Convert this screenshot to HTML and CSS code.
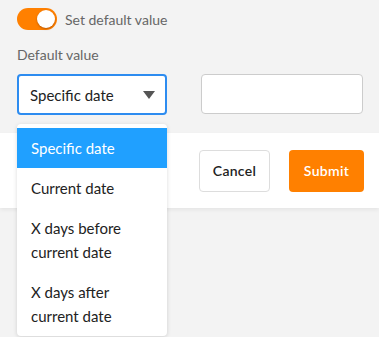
FILE: index.html
```html
<!DOCTYPE html>
<html lang="en">
<head>
    <meta charset="UTF-8">
    <title>Default value</title>
    <link rel="stylesheet" href="styles.css">
</head>
<body>
    <div class="form">
        <div class="switch-row">
            <span class="switch on"><span class="switch-knob"></span></span>
            <span class="switch-label">Set default value</span>
        </div>

        <div class="field-label">Default value</div>

        <div class="field-row">
            <div class="select-wrap">
                <div class="select focused">
                    <span class="select-value">Specific date</span>
                    <span class="caret"></span>
                </div>
                <ul class="dropdown">
                    <li class="dropdown-item selected">Specific date</li>
                    <li class="dropdown-item">Current date</li>
                    <li class="dropdown-item">X days before current date</li>
                    <li class="dropdown-item">X days after current date</li>
                </ul>
            </div>
            <input type="text" class="text-input">
        </div>
    </div>

    <div class="footer">
        <button class="btn btn-default">Cancel</button>
        <button class="btn btn-primary">Submit</button>
    </div>
</body>
</html>
```

FILE: styles.css
```css
* {
    margin: 0;
    padding: 0;
    box-sizing: border-box;
}

body {
    font-family: Lato, "Open Sans", sans-serif;
    background: #f3f3f3;
    color: #222;
    height: 337px;
    overflow: hidden;
}

.form {
    padding: 8px 16px 0 17px;
}

.switch-row {
    display: flex;
    align-items: center;
    gap: 8px;
    height: 22px;
}

.switch {
    position: relative;
    width: 40px;
    height: 22px;
    border-radius: 11px;
    background: #ccc;
}

.switch.on {
    background: #ff8000;
}

.switch-knob {
    position: absolute;
    top: 2px;
    right: 2px;
    width: 18px;
    height: 18px;
    border-radius: 50%;
    background: #fff;
    box-shadow: 0 1px 2px rgba(120, 50, 0, 0.5);
}

.switch-label {
    font-size: 14px;
    color: #666;
}

.field-label {
    margin-top: 16px;
    font-size: 14px;
    line-height: 18px;
    color: #666;
}

.field-row {
    display: flex;
    gap: 34px;
    margin-top: 10px;
}

.select-wrap {
    position: relative;
    width: 150px;
}

.select {
    display: flex;
    align-items: center;
    justify-content: space-between;
    height: 41px;
    padding: 0 10px 0 11px;
    background: #fff;
    border: 1px solid #ccc;
    border-radius: 4px;
    font-size: 15px;
}

.select.focused {
    border: 2px solid #2d8cf0;
}

.caret {
    width: 0;
    height: 0;
    border-left: 6px solid transparent;
    border-right: 6px solid transparent;
    border-top: 8px solid #555;
}

.text-input {
    width: 162px;
    height: 40px;
    background: #fff;
    border: 1px solid #ccc;
    border-radius: 4px;
    outline: none;
}

.dropdown {
    position: absolute;
    top: 50px;
    left: 0;
    width: 150px;
    padding-top: 4px;
    list-style: none;
    background: #fff;
    border-radius: 4px;
    box-shadow: 0 1px 4px rgba(0, 0, 0, 0.15);
    z-index: 10;
}

.dropdown-item {
    padding: 8px 14px;
    font-size: 15px;
    line-height: 24px;
    color: #222;
}

.dropdown-item.selected {
    background: #20a0ff;
    color: #fff;
}

.footer {
    display: flex;
    justify-content: flex-end;
    align-items: center;
    gap: 19px;
    height: 75px;
    margin-top: 18px;
    padding-right: 15px;
    background: #fff;
    box-shadow: 0 2px 4px rgba(0, 0, 0, 0.06);
}

.btn {
    height: 42px;
    border-radius: 4px;
    font-family: inherit;
    font-size: 14px;
    font-weight: 600;
    letter-spacing: 0.3px;
    cursor: pointer;
}

.btn-default {
    width: 71px;
    background: #fff;
    border: 1px solid #ddd;
    color: #222;
}

.btn-primary {
    width: 75px;
    background: #ff8000;
    border: none;
    color: #fff;
}
```
